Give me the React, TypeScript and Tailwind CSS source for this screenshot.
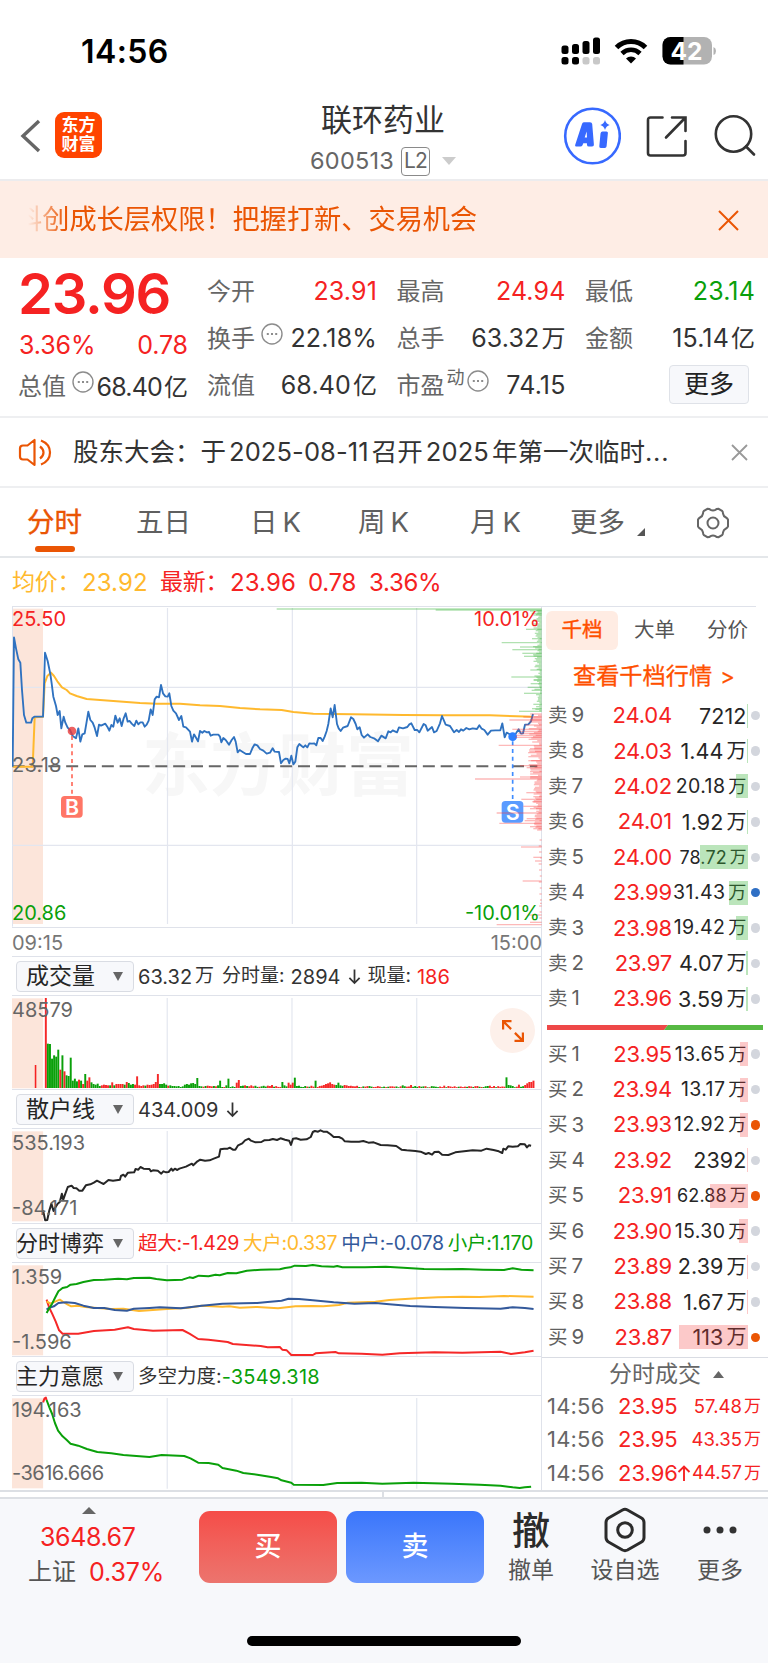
import React from "react";

const priceLine =
  "38,500 42,112 48,145 55,178 61,188 66,270 72,345 79,368 93,368 97,355 103,350 129,350 132,260 135,158 143,183 151,222 155,250 160,290 168,318 173,345 179,333 184,385 191,350 196,368 203,383 210,390 218,408 228,415 235,385 241,425 247,403 254,400 260,365 265,335 271,360 278,368 284,383 291,408 297,374 303,377 316,371 322,380 328,392 334,375 340,380 346,347 353,368 359,355 365,378 371,355 377,340 383,365 389,363 395,371 403,378 409,362 415,373 421,367 428,367 434,380 440,374 446,362 452,328 458,345 464,298 470,290 477,292 483,255 489,280 496,289 503,290 508,280 514,318 520,332 528,340 537,360 544,348 550,380 558,382 570,395 576,425 582,403 589,415 594,424 600,393 607,398 613,393 621,397 627,396 632,407 640,404 655,404 660,410 664,427 670,414 677,420 687,434 695,420 702,411 707,425 713,457 719,450 727,455 738,462 750,462 757,445 764,433 772,436 780,447 790,452 800,461 810,458 818,445 824,455 837,456 843,490 850,480 857,476 863,477 868,490 874,467 880,493 886,485 892,442 898,432 905,438 910,442 916,436 922,442 928,430 936,431 943,430 949,436 955,414 962,414 968,423 974,410 980,393 985,372 992,325 998,352 1004,315 1011,372 1016,385 1022,393 1029,383 1043,378 1053,352 1060,357 1067,372 1072,388 1079,382 1085,405 1092,413 1103,403 1111,411 1124,416 1134,424 1144,407 1157,415 1165,394 1172,397 1178,391 1191,397 1197,382 1209,385 1222,381 1228,373 1234,370 1244,390 1252,390 1258,397 1271,372 1277,376 1283,392 1296,381 1302,397 1310,393 1320,370 1326,348 1337,374 1350,378 1362,397 1370,390 1377,396 1383,388 1390,392 1399,384 1408,388 1418,385 1431,387 1438,376 1445,386 1453,390 1463,404 1473,392 1486,391 1501,391 1507,370 1514,412 1520,398 1528,402 1538,410 1548,400 1556,388 1563,401 1569,400 1575,374 1585,373 1593,364 1599,342";
const averageLine =
  "38,500 98,500 104,352 129,350 134,250 142,228 153,218 162,228 172,244 186,262 200,270 210,280 230,288 260,297 300,300 350,304 420,309 470,311 540,311 600,316 660,318 720,324 780,328 845,330 880,336 940,341 1060,343 1210,345 1330,346 1470,346 1550,349 1598,350";
const retailLine =
  "124,765 130,795 136,794 142,765 148,745 154,767 160,755 166,745 172,740 178,715 182,733 188,715 195,695 206,691 212,698 220,699 228,706 237,706 247,690 260,687 270,682 279,676 290,682 298,686 312,674 325,676 345,673 348,662 355,658 360,664 368,652 386,651 390,641 398,643 404,635 413,640 430,641 434,648 440,645 454,646 464,655 470,648 478,651 485,650 493,640 497,646 503,640 510,644 516,640 535,634 552,625 556,630 568,618 576,613 590,616 603,615 615,610 630,604 634,582 645,580 655,580 661,577 670,583 677,583 685,570 697,564 705,555 716,550 722,556 735,561 752,560 760,555 775,554 785,551 797,554 807,549 820,553 832,556 837,569 843,550 852,549 865,553 882,552 894,545 900,530 906,527 915,529 922,525 930,529 940,529 950,536 960,545 975,545 985,550 992,558 1010,559 1033,559 1045,557 1060,562 1075,561 1095,569 1115,570 1140,572 1155,583 1170,585 1195,587 1210,589 1225,596 1233,593 1243,598 1250,590 1262,589 1272,598 1290,599 1310,591 1335,588 1360,585 1385,586 1400,580 1420,584 1435,588 1445,593 1448,580 1455,583 1462,573 1475,574 1490,573 1497,566 1510,567 1516,576 1522,570 1528,571";
const gameSmall =
  "134,290 142,275 150,262 158,245 168,225 180,215 193,212 203,205 220,203 240,197 270,191 300,190 340,187 365,189 385,185 430,184 450,188 480,192 525,190 545,183 555,185 572,178 600,180 620,175 632,177 655,170 680,171 710,163 750,160 805,159 820,155 835,153 848,148 880,149 900,146 925,150 960,151 970,149 985,153 1050,153 1110,151 1160,154 1220,158 1280,159 1330,158 1390,160 1450,161 1475,156 1500,160 1535,162";
const gameLarge =
  "134,255 145,262 160,255 172,250 182,257 195,265 205,270 225,268 245,272 280,275 320,278 355,277 400,284 440,281 480,278 535,275 580,268 640,271 660,270 690,274 740,272 800,276 850,270 900,269 930,270 975,266 1000,259 1080,256 1120,251 1200,246 1260,243 1330,241 1380,242 1450,239 1535,241";
const gameMid =
  "134,280 142,274 155,270 168,260 190,258 215,260 240,268 270,275 300,275 330,281 365,283 385,277 430,275 460,273 520,276 545,273 580,268 640,262 700,261 740,260 770,257 810,253 830,247 860,248 900,252 960,258 1020,262 1080,260 1120,264 1180,269 1250,272 1340,275 1440,277 1475,273 1510,275 1535,278";
const gameHuge =
  "134,250 142,275 150,292 160,315 170,342 180,352 225,352 270,344 330,340 368,333 385,338 440,343 525,341 545,352 570,368 600,370 655,377 670,383 750,389 770,393 805,392 812,400 825,402 838,416 900,416 908,411 965,407 975,411 1040,412 1100,415 1150,411 1250,408 1330,409 1440,406 1470,413 1510,408 1535,403";
const mainForce =
  "134,553 142,575 150,595 158,622 167,645 180,662 192,673 203,684 225,690 250,700 280,709 320,713 355,718 430,724 465,718 530,721 548,728 570,741 600,742 628,747 640,757 680,765 700,772 740,777 780,784 800,788 810,794 838,801 845,807 930,808 970,802 1040,801 1100,804 1190,801 1300,804 1380,807 1440,810 1475,815 1495,817 1510,815 1528,813";

/* Resting orders by price: [y, left edge of the bar] */
const depthSell: [number, number][] = [
  [27, 830], [30, 1307], [33, 1590], [40, 1595], [45, 1600], [88, 1578], [116, 1596], [128, 1505], [141, 1560], [149, 1537], [160, 1567], [169, 1572],
  [210, 1591], [231, 1534], [240, 1600], [251, 1592], [262, 1583], [271, 1595], [280, 1572], [313, 1600], [326, 1596], [334, 1557],
];
const depthBuy: [number, number][] = [
  [351, 1570], [360, 1528], [375, 1575], [388, 1537], [394, 1560], [400, 1555], [406, 1548], [412, 1545], [436, 1496], [446, 1590], [455, 1588], [482, 1585],
  [497, 1560], [503, 1580], [515, 1590], [531, 1560], [537, 1425], [578, 1579], [590, 1600], [598, 1564], [605, 1597], [619, 1570], [626, 1590], [639, 1490],
  [656, 1580], [662, 1574], [670, 1498], [680, 1590], [686, 1600], [741, 1563], [772, 1600], [783, 1605], [843, 1568], [910, 1620], [945, 1585], [967, 1590], [974, 1490],
];
const noise = (n: number) => {
  const v = Math.sin(n * 12.9898) * 43758.5453;
  return v - Math.floor(v);
};

/* Minute volume; sign gives direction (positive: up, negative: down) */
const volumeHead = [
  270, -133, -132, -88, -98, -94, -115, 55, -98, 50, -38, -36, -91, -22, -28, -20, 25, -22, 12, -42, 22, 32, -17, -12, -10, -13, -6, 8, 10, 9, 8, -8, 17, -8,
  12, 12, 12, 12, -10, 18, -15, -10, -12, 10, 35, 8, 6, 8, -7, 10, 9, 10, 12, 18, 42, -12, -12, -14, -10, 7, -8, -6, -6, -5, -6, -3, -5, -10, -12, -10, -14,
  -15, -12, -30, -6, -5, 4, -6, 7, 6, 5, -6, 5, -8, -22, -3, 3, -8, -28, -3, -5, -3, 16, 24, -6, -7, 8, -6, 5, 8, 5,
];
const volumePeaks: Record<number, number> = {
  107: 7, 109: 9, 114: -18, 115: -8, 117: 16, 118: 10, 119: 16, 120: -31, 121: -6, 130: -22, 131: 3, 133: 7, 134: 9, 135: 12, 136: 14, 137: 17, 138: 12, 139: 10,
  140: -9, 141: -16, 142: -8, 144: 9, 145: 8, 146: 6, 172: -8, 176: 9, 192: 7, 213: -6, 214: 7, 222: -32, 223: -9, 224: -8, 225: -6, 228: 10, 231: 9, 232: 14, 233: 18, 234: 18, 235: 22, 236: 16,
};
const volumes = Array.from({ length: 236 }, (_, i) => {
  if (i < volumeHead.length) return volumeHead[i];
  if (volumePeaks[i] !== undefined) return volumePeaks[i];
  const size = i < 152 ? 3 + noise(i) * 4 : 2 + noise(i) * 4;
  return noise(i + 500) > 0.5 ? size : -size;
});

const sells: Level[] = [
  { n: "9", price: "24.04", vol: "7212", bar: 0.5 },
  { n: "8", price: "24.03", vol: "1.44", wan: true, bar: 0.7 },
  { n: "7", price: "24.02", vol: "20.18", wan: true, bar: 12, mid: true },
  { n: "6", price: "24.01", vol: "1.92", wan: true, bar: 0.8 },
  { n: "5", price: "24.00", vol: "78.72", wan: true, bar: 48, small: true },
  { n: "4", price: "23.99", vol: "31.43", wan: true, bar: 19, mid: true, dot: "blue" },
  { n: "3", price: "23.98", vol: "19.42", wan: true, bar: 12, mid: true },
  { n: "2", price: "23.97", vol: "4.07", wan: true, bar: 2 },
  { n: "1", price: "23.96", vol: "3.59", wan: true, bar: 2 },
];
const buys: Level[] = [
  { n: "1", price: "23.95", vol: "13.65", wan: true, bar: 8, mid: true },
  { n: "2", price: "23.94", vol: "13.17", wan: true, bar: 8, mid: true },
  { n: "3", price: "23.93", vol: "12.92", wan: true, bar: 8, mid: true, dot: "orange" },
  { n: "4", price: "23.92", vol: "2392", bar: 0.3 },
  { n: "5", price: "23.91", vol: "62.88", wan: true, bar: 38, small: true, dot: "orange" },
  { n: "6", price: "23.90", vol: "15.30", wan: true, bar: 9, mid: true },
  { n: "7", price: "23.89", vol: "2.39", wan: true, bar: 1 },
  { n: "8", price: "23.88", vol: "1.67", wan: true, bar: 1 },
  { n: "9", price: "23.87", vol: "113", wan: true, bar: 69, dot: "orange" },
];

type Level = { n: string; price: string; vol: string; wan?: boolean; bar: number; mid?: boolean; small?: boolean; dot?: "blue" | "orange" };

function LevelRow({ side, level }: { side: "卖" | "买"; level: Level }) {
  const size = level.small ? "text-[18px] tracking-[0.1px]" : level.mid ? "text-[19.5px] tracking-[0.4px]" : "text-[21.5px] tracking-[0.1px]";
  const dot = level.dot === "blue" ? "bg-[#2f6fc4]" : level.dot === "orange" ? "bg-[#ea5504]" : "bg-[#d3d6dd]";
  return (
    <div className="flex h-[35.4px] items-center pr-2 pl-[6px]">
      <span className="flex w-[38px] items-center gap-[4px] text-[#5f5f5f]">
        <span className="text-[19.5px]">{side}</span>
        <span className="text-[20.5px]">{level.n}</span>
      </span>
      <span className="w-[86px] text-right text-[22px] tracking-[-0.2px] text-[#f52222]">{level.price}</span>
      <span className="relative flex h-6 flex-1 items-center justify-end pr-[1px] text-[#262626]">
        <span className={`flex items-center gap-[3px] ${size}`}>
          <span>{level.vol}</span>
          {level.wan && <span className="text-[0.93em] tracking-normal">万</span>}
        </span>
        <span
          className={`absolute top-0 right-0 h-6 ${side === "卖" ? "bg-[#3cb43c]/35" : "bg-[#f53c3c]/28"}`}
          style={{ width: level.bar }}
        />
      </span>
      <span className={`ml-[3px] size-[9.5px] shrink-0 rounded-full ${dot}`} />
    </div>
  );
}

function InfoDot() {
  return (
    <svg className="size-[22px] shrink-0" viewBox="0 0 22 22" fill="none" stroke="#8c8c8c" strokeWidth="1.4">
      <circle cx="11" cy="11" r="10" />
      <path d="M5.8 11h2M10 11h2M14.2 11h2" strokeWidth="1.9" />
    </svg>
  );
}

function Axis({ className, children }: { className: string; children: React.ReactNode }) {
  return <span className={`absolute text-[20px] leading-5 ${className}`}>{children}</span>;
}

function Line({ points, color, width = 2 }: { points: string; color: string; width?: number }) {
  return <polyline points={points} fill="none" stroke={color} strokeWidth={width} strokeLinejoin="round" vectorEffect="non-scaling-stroke" />;
}

function Panel({
  title, wide, info, top, high, low, lowClass = "", height, children, overlay,
}: {
  title: string; wide?: boolean; info: React.ReactNode; top: number; high: string; low?: string; lowClass?: string; height: string;
  children: React.ReactNode; overlay?: React.ReactNode;
}) {
  return (
    <section className={`flex flex-col border-t border-[#dfe2ea] ${height}`}>
      <div className="flex h-[38px] shrink-0 items-center pl-1">
        <div className={`flex h-[31px] w-[118px] shrink-0 items-center justify-between rounded-[4px] border border-[#d9dce3] bg-[#f7f8fb] pr-[10px] text-[#262626] ${wide ? "pl-0 text-[22px]" : "pl-[9px] text-[23px]"}`}>
          <span className={`whitespace-nowrap ${wide ? "-ml-px" : ""}`}>{title}</span>
          <svg className="w-[10px] shrink-0" viewBox="0 0 10 9"><path d="M0 0h10L5 9z" fill="#666" /></svg>
        </div>
        <div className="ml-1 flex items-center pt-px whitespace-nowrap text-[20px] text-[#333]">{info}</div>
      </div>
      <div className="relative h-[94px] border-t border-[#dfe2ea]">
        <svg className="block h-[94px] w-[530px]" viewBox={`34.5 ${top} 1524.8 282`} preserveAspectRatio="none">
          <rect x="34.5" y={top + 7} width="89.5" height="270" fill="#fce5da" />
          {[481, 840, 1199].map((x) => (
            <path key={x} d={`M${x} ${top + 6}V${top + 278}`} stroke="#dfe3ed" strokeWidth="3" />
          ))}
          {children}
        </svg>
        <Axis className="top-[4px] left-0 text-[#666]">{high}</Axis>
        {low && <Axis className={`top-[69px] left-0 text-[#666] ${lowClass}`}>{low}</Axis>}
        {overlay}
      </div>
    </section>
  );
}

function Arrow({ up = false, className = "" }: { up?: boolean; className?: string }) {
  return (
    <svg className={className} viewBox="0 0 14 16" fill="none" stroke="currentColor" strokeWidth="1.9">
      {up ? <path d="M7 16V1.5M1.500 7L7 1.500L12.500 7" /> : <path d="M7 0v14.500M1.500 9L7 14.500L12.500 9" />}
    </svg>
  );
}

function StatusBar() {
  return (
    <div className="flex h-[100px] items-start justify-between pr-[52px] pl-[81px]">
      <span className="mt-[36px] text-[32px] leading-[32px] font-semibold tracking-[0.4px] text-black">14:56</span>
      <svg className="mt-[36px] h-[30px] w-[155px]" viewBox="561 36 155 30">
        <g fill="#000">
          <rect x="561.500" y="45.500" width="7" height="8.500" rx="2.500" />
          <rect x="572" y="44" width="7" height="10" rx="2.500" />
          <rect x="582.500" y="41" width="7" height="13" rx="2.500" />
          <rect x="593" y="37.500" width="7" height="16.500" rx="2.500" />
          <rect x="561.500" y="57" width="7" height="7.500" rx="2.500" />
          <rect x="572" y="57" width="7" height="7.500" rx="2.500" />
        </g>
        <rect x="582.500" y="57" width="7" height="7.500" rx="2.500" fill="#c8c8c8" />
        <rect x="593" y="57" width="7" height="7.500" rx="2.500" fill="#c8c8c8" />
        <path d="M616.500 47.500a20.500 20.500 0 0 1 29 0" fill="none" stroke="#000" strokeWidth="5" />
        <path d="M622 53.500a12.800 12.800 0 0 1 18 0" fill="none" stroke="#000" strokeWidth="4.600" />
        <path d="M626 58.500a7 7 0 0 1 10 0l-5 5z" fill="#000" />
        <clipPath id="cell"><rect x="662.500" y="37" width="49.500" height="27.500" rx="8" /></clipPath>
        <g clipPath="url(#cell)">
          <rect x="662" y="37" width="51" height="28" fill="#b2b2b2" />
          <rect x="662" y="37" width="21.500" height="28" fill="#000" />
        </g>
        <path d="M713.500 47q2.500 1 2.500 4t-2.500 4z" fill="#b2b2b2" />
        <text x="686.500" y="59.700" textAnchor="middle" fontSize="24.500" fontWeight="700" fill="#fff">42</text>
      </svg>
    </div>
  );
}

function Header() {
  return (
    <header className="flex h-[81px] items-start border-b-2 border-[#ececee] pl-5">
      <svg className="mt-[19px] h-[34px] w-[21px]" viewBox="0 0 21 34" fill="none" stroke="#666" strokeWidth="3.400"><path d="M19 2L3 17l16 15" /></svg>
      <div className="mt-3 ml-[14px] flex h-[46px] w-[47px] flex-col items-center justify-center rounded-[9px] bg-[#ff4400] text-[17px] leading-[19px] font-bold text-white">
        <span>东方</span><span>财富</span>
      </div>
      <div className="ml-[181px] flex w-[200px] flex-col items-center">
        <h1 className="mt-[3px] text-[31px] leading-[34px] text-[#333]">联环药业</h1>
        <div className="mt-[9px] flex items-center text-[#666]">
          <span className="text-[23.500px] leading-[30px] tracking-[0.200px]">600513</span>
          <span className="ml-[7px] flex h-[29px] w-[29px] items-center justify-center rounded-[4px] border-[1.500px] border-[#8a8a8a] text-[21px] tracking-[-1px]">L2</span>
          <svg className="ml-3 h-[8px] w-[14px]" viewBox="0 0 14 8"><path d="M0 0h14L7 8z" fill="#ccc" /></svg>
        </div>
      </div>
      <svg className="mt-[7px] ml-[80px] h-[58px] w-[58px]" viewBox="0 0 58 58">
        <circle cx="29.500" cy="29" r="27.300" fill="#fff" stroke="#3769ff" strokeWidth="2.600" />
        <path d="M20.800 15.300h6.200q2 0 2.200 1.800l1.700 20.500q.2 2-1.800 2h-3.200q-1.800 0-1.900-1.700l-.1-1.600h-3.600l-.8 1.900q-.6 1.400-2.200 1.400h-3.600q-2.200 0-1.400-2.100l6.700-20.600q.5-1.600 1.800-1.600zM23.600 24.500l-1.900 6h2.300z" fill="#3769ff" fillRule="evenodd" />
        <path d="M39.500 24.500h4q1.600 0 1.400 1.600l-1.300 13.200q-.2 1.700-1.800 1.700h-4q-1.700 0-1.500-1.700l1.200-12.700q.3-2.100 2-2.100zM42 13q1 4 4.700 5q-3.700 1-4.700 5q-1-4-4.700-5q3.700-1 4.700-5z" fill="#3769ff" />
      </svg>
      <svg className="mt-[15px] ml-[25px] h-[42px] w-[42px]" viewBox="0 0 42 42" fill="none" stroke="#333" strokeWidth="2.600" strokeLinecap="round">
        <path d="M16.500 2.500H4.500q-2.500 0-2.500 2.500v33q0 2.500 2.500 2.500h32.500q2.500 0 2.500-2.500V26M26 2.500h13.500V16M39 3L20 22.500" />
      </svg>
      <svg className="mt-[14px] ml-[26px] h-[43px] w-[42px]" viewBox="0 0 42 43" fill="none" stroke="#333" strokeWidth="2.600" strokeLinecap="round">
        <circle cx="19.500" cy="20" r="17.700" /><path d="M32 32.500l8 8" />
      </svg>
    </header>
  );
}

function Stat({ label, value, color = "text-[#333]", extra }: { label: string; value: React.ReactNode; color?: string; extra?: React.ReactNode }) {
  return (
    <div className="flex h-[47px] items-center justify-between whitespace-nowrap">
      <span className="flex items-center text-[24px] text-[#666]">{label}{extra}</span>
      <span className={`flex items-center text-[25px] tracking-[0.150px] ${color}`}>{value}</span>
    </div>
  );
}

const Unit = ({ n, u }: { n: string; u: string }) => (
  <><span>{n}</span><span className="ml-[2px] text-[24px] tracking-normal">{u}</span></>
);

function Quote() {
  return (
    <section className="flex h-[160px] border-b-2 border-[#eeeff1] pr-3 pl-[18px]">
      <div className="flex w-[170px] flex-col">
        <div className="mt-[9px] h-[54px] text-[56px] leading-[54px] font-semibold tracking-[-1.200px] text-[#f52222]">23.96</div>
        <div className="mt-[9px] flex h-[32px] items-center justify-between pl-px text-[25px] tracking-[-0.100px] text-[#f52222]">
          <span>3.36%</span><span>0.78</span>
        </div>
        <div className="mt-px flex h-[47px] items-center justify-between whitespace-nowrap">
          <span className="flex items-center text-[24px] text-[#666]">总值<span className="mb-[9px] ml-[6px]"><InfoDot /></span></span>
          <span className="mt-[3px] flex items-center text-[25px] tracking-[-0.800px] text-[#333]"><Unit n="68.40" u="亿" /></span>
        </div>
      </div>
      <div className="mt-[10px] ml-[19px] grid flex-1 grid-cols-[170px_169px_170px] content-start gap-x-[19.500px]">
        <Stat label="今开" value="23.91" color="text-[#f52222]" />
        <Stat label="最高" value="24.94" color="text-[#f52222]" />
        <Stat label="最低" value="23.14" color="text-[#0a9f0a]" />
        <Stat label="换手" value="22.18%" extra={<span className="mb-[9px] ml-[6px]"><InfoDot /></span>} />
        <Stat label="总手" value={<Unit n="63.32" u="万" />} />
        <Stat label="金额" value={<Unit n="15.14" u="亿" />} />
        <Stat label="流值" value={<Unit n="68.40" u="亿" />} />
        <Stat label="市盈" value="74.15" extra={<><span className="mb-[16px] ml-[2px] text-[18px]">动</span><span className="mb-[9px] ml-[2px]"><InfoDot /></span></>} />
        <div className="flex h-[45px] items-center justify-end pr-[6px]">
          <button className="flex h-[39px] w-[80px] items-center justify-center rounded-[4px] border border-[#dfe2e8] bg-[#f7f8fb] text-[25px] text-[#222]">更多</button>
        </div>
      </div>
    </section>
  );
}

function Tabs() {
  return (
    <nav className="flex h-[70px] items-center border-b-2 border-[#e4e7ea] pt-px pl-[27px] text-[27.500px] text-[#5f5f5f]">
      <span className="relative w-[109px] text-[#ea5504]">
        <span className="[-webkit-text-stroke:0.4px_#ea5504]">分时</span>
        <i className="absolute -bottom-[9px] left-[8px] h-[6px] w-10 rounded-full bg-[#ea5504]" />
      </span>
      <span className="w-[114px]">五日</span>
      <span className="w-[108px]">日<span className="ml-[5px]">K</span></span>
      <span className="w-[112px]">周<span className="ml-[5px]">K</span></span>
      <span className="w-[100px]">月<span className="ml-[5px]">K</span></span>
      <span className="w-[67px]">更多</span>
      <svg className="mt-[19px] size-[8px]" viewBox="0 0 8 8"><path d="M8 0v8H0z" fill="#555" /></svg>
      <svg className="ml-[51px] h-[32px] w-[34px]" viewBox="0 0 34 32" fill="none" stroke="#666" strokeWidth="2">
        <path d="M11.500 1.800q2 0 3 1q2.500 1.200 5 0q1-1 3-1l3.500 2q1 1 1 2.700q.4 2.800 3 4q1.500.8 2 2.200v6.600q-.5 1.400-2 2.200q-2.600 1.200-3 4q0 1.700-1 2.700l-3.500 2q-2 0-3-1q-2.500-1.200-5 0q-1 1-3 1l-3.500-2q-1-1-1-2.700q-.4-2.800-3-4q-1.500-.8-2-2.200v-6.600q.5-1.400 2-2.200q2.600-1.200 3-4q0-1.700 1-2.700z" />
        <circle cx="17" cy="16" r="5.500" />
      </svg>
    </nav>
  );
}

function PriceChart() {
  return (
    <div className="relative h-[322px] border-y border-[#dfe2ea]">
      <span className="absolute top-[118px] left-[130px] text-[68px] leading-[80px] font-bold text-[#f7f7f7]">东方财富</span>
      <svg className="absolute top-0 left-0 h-[320px] w-[530px]" viewBox="36 21 1590 960">
        <rect x="38" y="26" width="91" height="946" fill="#fce5da" />
        <path d="M37.500 21V980" stroke="#dfe3ed" strokeWidth="3" />
        <path d="M502.500 24V972M877 24V972M1250 24V972M36 262H1624M36 736H1624" stroke="#e3e6ef" strokeWidth="3.600" />
        <path d="M38 499H1612" stroke="#666" strokeWidth="6" strokeDasharray="36 17.500" />
        <polyline points={averageLine} fill="none" stroke="#ffb92e" strokeWidth="6" strokeLinejoin="round" />
        <polyline points={priceLine} fill="none" stroke="#2f72c0" strokeWidth="5.600" strokeLinejoin="round" />
        <circle cx="216" cy="393" r="13" fill="#e83a3a" fillOpacity=".8" />
        <path d="M216 408V586" stroke="#ff6b5b" strokeWidth="5" strokeDasharray="12 11" />
        <rect x="183" y="588" width="65" height="65" rx="11" fill="#ff7666" />
        <circle cx="1538" cy="410" r="13" fill="#2c80ff" />
        <path d="M1538 424V602" stroke="#3f8cff" strokeWidth="5" strokeDasharray="12 11" />
        <rect x="1505" y="603" width="65" height="65" rx="11" fill="#5a9bff" />
        <g fill="#fff" fontSize="64" fontWeight="600" textAnchor="middle">
          <text x="216" y="644">B</text><text x="1538" y="659">S</text>
        </g>
        <g stroke="#3cb43c" strokeOpacity=".4" strokeWidth="4">
          {depthSell.map(([y, x]) => <path key={y} d={`M${x} ${y}H1625`} />)}
          {Array.from({ length: 76 }, (_, i) => <path key={i} d={`M${1622 - noise(i + 3) * 23} ${32 + i * 4}H1625`} />)}
        </g>
        <g stroke="#fa3c3c" strokeOpacity=".36" strokeWidth="4">
          {depthBuy.map(([y, x]) => <path key={y} d={`M${x} ${y}H1625`} />)}
          {Array.from({ length: 88 }, (_, i) => <path key={i} d={`M${1619 - noise(i + 90) * (i < 50 ? 35 : 20)} ${342 + i * 4}H1625`} />)}
          {Array.from({ length: 14 }, (_, i) => <path key={i} d={`M${1622 - noise(i + 9) * 6} ${720 + i * 18}H1625`} />)}
        </g>
      </svg>
      <Axis className="top-[2px] left-0 text-[#f52222]">25.50</Axis>
      <Axis className="top-[148px] left-0 tracking-[0.200px] text-[#666]">23.18</Axis>
      <Axis className="top-[296px] left-0 text-[#0a9f0a]">20.86</Axis>
      <Axis className="top-[2px] right-[1px] text-[#f52222]">10.01%</Axis>
      <Axis className="top-[296px] right-[1px] text-[#0a9f0a]">-10.01%</Axis>
    </div>
  );
}

function Charts() {
  return (
    <div className="flex w-[542px] shrink-0 flex-col border-r border-[#dfe2ea] pl-3">
      <PriceChart />
      <div className="flex h-[28px] items-center justify-between pt-px text-[20px] text-[#777]"><span>09:15</span><span className="-mr-px">15:00</span></div>
      <Panel
        title="成交量" top={120} high="48579" height="h-[133px]"
        info={<><span>63.32</span><span className="ml-[3px] text-[19px]">万</span><span className="ml-2 text-[19px]">分时量:</span><span className="ml-[6px]">2894</span><Arrow className="mx-[7px] h-[16px] w-[13px]" /><span className="text-[19px]">现量:</span><span className="ml-[6px]  text-[#f52222]">186</span></>}
        overlay={
          <span className="absolute top-[12px] left-[478px] flex size-[45px] items-center justify-center rounded-full bg-[#fdf0ea]">
            <svg className="size-[24px]" viewBox="0 0 24 24" fill="none" stroke="#ea5504" strokeWidth="2.200">
              <path d="M2.100 10.500V2.100h8.400M2.100 2.100l8 8M21.900 13.500v8.400h-8.400M21.900 21.900l-8-8" />
            </svg>
          </span>
        }
      >
        <rect x="100" y="327" width="4.500" height="69" fill="#f52222" />
        {volumes.map((v, i) => (
          <rect key={i} x={129 + i * 5.970} y={396 - Math.abs(v)} width="5.600" height={Math.abs(v)} fill={v > 0 ? "#f52828" : "#0aa00a"} />
        ))}
      </Panel>
      <Panel title="散户线" top={521} high="535.193" low="-84.171" height="h-[134px]" info={<><span>434.009</span><Arrow className="ml-2 h-[16px] w-[13px]" /></>}>
        <Line points={retailLine} color="#262626" />
      </Panel>
      <Panel
        title="分时博弈" wide top={140} high="1.359" low="-1.596" height="h-[133px]"
        info={<div className="flex gap-1 text-[19.500px] tracking-[-0.300px]"><span className="text-[#f52222]">超大:-1.429</span><span className="text-[#ffb92e]">大户:0.337</span><span className="text-[#33599b]">中户:-0.078</span><span className="text-[#0a9f0a]">小户:1.170</span></div>}
      >
        <Line points={gameHuge} color="#f52828" />
        <Line points={gameLarge} color="#ffb92e" />
        <Line points={gameMid} color="#33599b" />
        <Line points={gameSmall} color="#0aa00a" />
      </Panel>
      <Panel
        title="主力意愿" wide top={541} high="194.163" low="-3616.666" lowClass="-mt-[2px] tracking-[-0.500px]" height="h-[134px]"
        info={<><span className="text-[19.500px]">多空力度:</span><span className="tracking-[0.200px] text-[#0a9f0a]">-3549.318</span></>}
      >
        <Line points="124,560 128,548 132,546 134,553" color="#f52828" />
        <Line points={mainForce} color="#0aa00a" />
      </Panel>
    </div>
  );
}

function OrderBook() {
  return (
    <aside className="flex flex-1 flex-col">
      <div className="mr-3 h-px bg-[#dfe2ea]" />
      <div className="mt-1 flex h-[39px] items-center pl-1 text-[20.500px] text-[#555]">
        <span className="flex h-[39px] w-[72px] items-center justify-center rounded-[6px] bg-[#ffece3] text-[#ff5000] [-webkit-text-stroke:0.4px_#ff5000]">千档</span>
        <span className="ml-4">大单</span>
        <span className="ml-8">分价</span>
      </div>
      <div className="mt-[8px] flex h-[36px] items-center pl-[31px] text-[23.200px] text-[#ff5000] [-webkit-text-stroke:0.3px_#ff5000]">查看千档行情<span className="ml-2 text-[22px]">&gt;</span></div>
      <div className="mt-[4px]">{sells.map((l) => <LevelRow key={l.n} side="卖" level={l} />)}</div>
      <svg className="mt-[8px] mb-[7px] ml-[5px] h-[5px] w-[216px] shrink-0" viewBox="0 0 216 5">
        <path d="M0 0h121l-4 5H0z" fill="#ee4848" /><path d="M121 0h95v5h-99z" fill="#56b943" />
      </svg>
      <div>{buys.map((l) => <LevelRow key={l.n} side="买" level={l} />)}</div>
      <div className="mt-[2px] flex h-[33px] items-center border-t border-[#d9dce3] pl-[67px] text-[23px] text-[#666]">
        分时成交
        <svg className="ml-[12px] h-[7px] w-[11px]" viewBox="0 0 11 7"><path d="M5.500 0L11 7H0z" fill="#666" /></svg>
      </div>
      {[["23.95", "57.48"], ["23.95", "43.35"], ["23.96", "44.57"]].map(([price, vol], i) => (
        <div key={vol} className="flex h-[33.300px] items-center pr-[7px] pl-[5px] text-[#f52222]">
          <span className="w-[71px] text-[22px] tracking-[0.200px] text-[#666]">14:56</span>
          <span className="w-[59px] text-[22px]">{price}</span>
          {i === 2 && <Arrow up className="h-[16px] w-[14px] shrink-0" />}
          <span className="ml-auto flex items-center gap-[2px] text-[18.500px]">{vol}<span className="text-[17px]">万</span></span>
        </div>
      ))}
    </aside>
  );
}

function BottomBar() {
  return (
    <footer className="flex h-[164px] flex-col bg-[#f7f8fb]">
      <div className="flex h-[100px] items-start">
        <div className="flex w-[199px] flex-col pl-[28px] text-[25px] text-[#f52222]">
          <svg className="mt-[8px] ml-[54px] h-[7px] w-[14px]" viewBox="0 0 14 7"><path d="M7 0l7 7H0z" fill="#666" /></svg>
          <span className="mt-[7px] ml-[12px] leading-[32px] tracking-[-0.400px]">3648.67</span>
          <span className="mt-[2px] flex items-center leading-[34px] tracking-[-0.100px]"><span className="mr-[13px] text-[24px] tracking-normal text-[#555]">上证</span>0.37%</span>
        </div>
        <button className="mt-3 flex h-[72px] w-[138px] items-center justify-center rounded-[11px] bg-linear-to-b from-[#f54c48] to-[#ec746e] text-[27px] font-medium text-white">买</button>
        <button className="mt-3 ml-[9px] flex h-[72px] w-[138px] items-center justify-center rounded-[11px] bg-linear-to-b from-[#3a76fb] to-[#6c98ff] text-[27px] font-medium text-white">卖</button>
        <div className="ml-[9px] flex w-[76px] shrink-0 flex-col items-center text-[23px] text-[#555]">
          <span className="mt-[10px] h-[44px] text-[38px] leading-[42px] font-medium text-[#2b2b2b]">撤</span>
          <span className="leading-[34px]">撤单</span>
        </div>
        <div className="ml-[6px] flex w-[100px] shrink-0 flex-col items-center text-[23px] text-[#555]">
          <svg className="mt-[8px] h-[46px] w-[42px]" viewBox="0 0 42 45" fill="none" stroke="#2b2b2b" strokeWidth="3">
            <path d="M18.500 2.500q2.500-1.300 5 0l14 8q2.500 1.500 2.500 4.500v15q0 3-2.500 4.500l-14 8q-2.500 1.300-5 0l-14-8q-2.500-1.500-2.500-4.500v-15q0-3 2.500-4.500z" />
            <circle cx="21" cy="22.500" r="7.300" />
          </svg>
          <span className="leading-[34px]">设自选</span>
        </div>
        <div className="ml-[22px] flex shrink-0 flex-col items-center text-[23px] text-[#555]">
          <svg className="mt-[27px] h-[8px] w-[34px]" viewBox="0 0 34 8" fill="#333"><circle cx="4" cy="4" r="3.500" /><circle cx="17" cy="4" r="3.500" /><circle cx="30" cy="4" r="3.500" /></svg>
          <span className="mt-[19px] leading-[34px]">更多</span>
        </div>
      </div>
      <div className="mt-[37px] h-[10px] w-[274px] self-center rounded-full bg-black" />
    </footer>
  );
}

export default function App() {
  return (
    <div className="h-[1663px] w-[768px] overflow-hidden bg-white font-['Inter','Noto_Sans_CJK_SC',sans-serif]">
      <StatusBar />
      <Header />
      <section className="flex h-[77px] items-center justify-between bg-[#feede5] pt-px pr-[29px] pl-[15px] text-[#ea5504]">
        <div className="mask-[linear-gradient(to_right,transparent_13px,black_50px)] text-[27.200px] whitespace-nowrap">科创成长层权限！把握打新、交易机会</div>
        <svg className="size-[21px]" viewBox="0 0 21 21" fill="none" stroke="#ea5504" strokeWidth="2"><path d="M1 1l19 19M20 1L1 20" /></svg>
      </section>
      <Quote />
      <section className="flex h-[70px] items-center border-b-2 border-[#eeeff1] pr-5 pl-[18px] text-[25.500px] text-[#333]">
        <svg className="h-[29px] w-[35px]" viewBox="0 0 35 29" fill="none" stroke="#ea5504" strokeWidth="2.200" strokeLinejoin="round">
          <path d="M16.500 2v25l-7-5.500H5q-3 0-3-3v-8q0-3 3-3h4.500zM22 8.500q3.500 2.500 3.500 6t-3.500 6M23 2.500q9 3.500 9 12t-9 12" />
        </svg>
        <span className="ml-[20px] flex items-center whitespace-nowrap">股东大会：于<span className="mx-[3px] tracking-[0.100px]">2025-08-11</span>召开<span className="mx-[3px] tracking-[0.100px]">2025</span>年第一次临时<span className="tracking-[0.800px]">...</span></span>
        <svg className="ml-auto size-[17px]" viewBox="0 0 17 17" fill="none" stroke="#999" strokeWidth="1.800"><path d="M1 1l15 15M16 1L1 16" /></svg>
      </section>
      <Tabs />
      <div className="flex h-[48px] items-center pt-px pl-3 text-[24px] tracking-[-0.300px] whitespace-nowrap text-[#f52222]">
        <span className="w-[70px] text-[23px] text-[#ffb92e]">均价：</span>
        <span className="w-[78px] tracking-[0.100px] text-[#ffb92e]">23.92</span>
        <span className="w-[70px] text-[23px]">最新：</span>
        <span className="w-[78px] tracking-[0.100px]">23.96</span>
        <span className="w-[61px]">0.78</span>
        <span>3.36%</span>
      </div>
      <main className="flex h-[884px]">
        <Charts />
        <OrderBook />
      </main>
      <div className="flex h-[9px] border-y-2 border-[#dcdfe4]">
        <div className="w-[384px] border-r-2 border-[#dcdfe4]" />
      </div>
      <BottomBar />
    </div>
  );
}
